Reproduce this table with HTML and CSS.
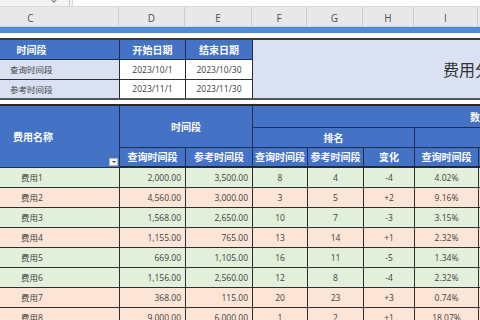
FILE: index.html
```html
<!DOCTYPE html>
<html lang="zh-CN">
<head>
<meta charset="utf-8">
<title>费用分析</title>
<link rel="stylesheet" href="styles.css">
</head>
<body>
<div class="formula">
  <div class="namebox"><span class="caret"></span></div>
  <div class="fx"></div>
</div>
<div class="sheet">
  <div class="colheads">
    <span class="c-c">C</span><span class="c-d">D</span><span class="c-e">E</span><span class="c-f">F</span><span class="c-g">G</span><span class="c-h">H</span><span class="c-i">I</span><span class="c-j"></span>
  </div>
  <div class="bluebar"></div>
  <div class="gap"></div>
  <table class="grid t1">
    <colgroup><col class="w-c"><col class="w-d"><col class="w-e"><col class="w-f"><col class="w-g"><col class="w-h"><col class="w-i"><col class="w-j"></colgroup>
    <tr>
      <th class="h">时间段</th>
      <th class="h">开始日期</th>
      <th class="h">结束日期</th>
      <td class="title" colspan="5" rowspan="3">费用分析</td>
    </tr>
    <tr>
      <td class="label">查询时间段</td>
      <td class="date">2023/10/1</td>
      <td class="date">2023/10/30</td>
    </tr>
    <tr class="last">
      <td class="label">参考时间段</td>
      <td class="date">2023/11/1</td>
      <td class="date">2023/11/30</td>
    </tr>
  </table>
  <table class="grid t2">
    <colgroup><col class="w-c"><col class="w-d"><col class="w-e"><col class="w-f"><col class="w-g"><col class="w-h"><col class="w-i"><col class="w-j"></colgroup>
    <tr class="r1">
      <th class="h name-h" rowspan="3">费用名称<span class="filter"></span></th>
      <th class="h" colspan="2" rowspan="2">时间段</th>
      <th class="h data-h" colspan="5">数据分析</th>
    </tr>
    <tr class="r2">
      <th class="h" colspan="3">排名</th>
      <th class="h" colspan="2"></th>
    </tr>
    <tr class="r3">
      <th class="h">查询时间段</th>
      <th class="h">参考时间段</th>
      <th class="h">查询时间段</th>
      <th class="h">参考时间段</th>
      <th class="h">变化</th>
      <th class="h">查询时间段</th>
      <th class="h"></th>
    </tr>
    <tr class="down"><td class="nm">费用1</td><td class="num">2,000.00</td><td class="num">3,500.00</td><td>8</td><td>4</td><td>-4</td><td>4.02%</td><td></td></tr>
    <tr class="up"><td class="nm">费用2</td><td class="num">4,560.00</td><td class="num">3,000.00</td><td>3</td><td>5</td><td>+2</td><td>9.16%</td><td></td></tr>
    <tr class="down"><td class="nm">费用3</td><td class="num">1,568.00</td><td class="num">2,650.00</td><td>10</td><td>7</td><td>-3</td><td>3.15%</td><td></td></tr>
    <tr class="up"><td class="nm">费用4</td><td class="num">1,155.00</td><td class="num">765.00</td><td>13</td><td>14</td><td>+1</td><td>2.32%</td><td></td></tr>
    <tr class="down"><td class="nm">费用5</td><td class="num">669.00</td><td class="num">1,105.00</td><td>16</td><td>11</td><td>-5</td><td>1.34%</td><td></td></tr>
    <tr class="down"><td class="nm">费用6</td><td class="num">1,156.00</td><td class="num">2,560.00</td><td>12</td><td>8</td><td>-4</td><td>2.32%</td><td></td></tr>
    <tr class="up"><td class="nm">费用7</td><td class="num">368.00</td><td class="num">115.00</td><td>20</td><td>23</td><td>+3</td><td>0.74%</td><td></td></tr>
    <tr class="up"><td class="nm">费用8</td><td class="num">9,000.00</td><td class="num">6,000.00</td><td>1</td><td>2</td><td>+1</td><td>18.07%</td><td></td></tr>
  </table>
</div>
</body>
</html>
```
FILE: styles.css
```css
* { box-sizing: border-box; }
html, body { margin: 0; padding: 0; }
body {
  width: 480px;
  height: 320px;
  overflow: hidden;
  background: #ffffff;
  font-family: "Open Sans", "Noto Sans CJK SC", sans-serif;
  color: #404040;
}

/* formula bar strip */
.formula {
  height: 7px;
  display: flex;
  background: #f4f4f4;
  border-bottom: 1px solid #d9d9d9;
}
.namebox {
  width: 70px;
  border-right: 1px solid #c9c9c9;
  position: relative;
}
.caret {
  position: absolute;
  left: 52px;
  top: -2px;
  width: 4px;
  height: 4px;
  border-right: 1px solid #777;
  border-bottom: 1px solid #777;
  transform: rotate(45deg);
}
.fx {
  flex: 1;
  margin-left: 2px;
  background: #ffffff;
  border-left: 1px solid #d5d5d5;
}

/* sheet scrolled so that column C is partly hidden */
.sheet {
  margin-left: -57px;
  width: 600px;
}

.colheads {
  display: flex;
  height: 20px;
  background: #e8e8e8;
  border-bottom: 1px solid #d2d2d2;
}
.colheads span {
  flex: none;
  height: 100%;
  border-right: 1px solid #cdcdcd;
  font: 10px "Open Sans", sans-serif;
  color: #505050;
  text-align: center;
  line-height: 22px;
}
.c-c { width: 176px; }
.c-d { width: 66px; }
.c-e { width: 67px; }
.c-f { width: 55px; }
.c-g { width: 56px; }
.c-h { width: 51px; }
.c-i { width: 64px; }
.c-j { width: 60px; }

.bluebar {
  height: 6px;
  background: #4d8dd5;
}
.gap { height: 5px; }

/* tables */
.grid {
  border-collapse: collapse;
  table-layout: fixed;
  width: 595px;
}
.w-c { width: 176px; }
.w-d { width: 66px; }
.w-e { width: 67px; }
.w-f { width: 55px; }
.w-g { width: 56px; }
.w-h { width: 51px; }
.w-i { width: 64px; }
.w-j { width: 60px; }

.grid th, .grid td {
  border: 1px solid #2e2e2e;
  padding: 0;
  height: 20px;
  vertical-align: middle;
  font-size: 8.5px;
  font-weight: normal;
  text-align: center;
  white-space: nowrap;
  overflow: hidden;
}
.grid .h {
  background: #4472c4;
  color: #ffffff;
  font-weight: bold;
  font-size: 10px;
  border-color: #1e2f52;
}

.t1 { border-top: 2px solid #3a3a3a; }
.t1 .label {
  background: #d9e1f2;
  text-align: left;
  padding-left: 66px;
  color: #454545;
}
.t1 .date { background: #ffffff; }
.t1 .title {
  background: #d9e1f2;
  text-align: left;
  padding-left: 190px;
  font-size: 16px;
  color: #333333;
  border-bottom: 2px solid #555555;
}
.t1 .last td { border-bottom: 2px solid #555555; }

.t2 {
  margin-top: 4px;
  border-top: 2px solid #2a2a2a;
}
.t2 .r1 th { height: 22px; }
.t2 .r3 th { border-bottom: 2px solid #1e2a40; }
.t2 .name-h {
  position: relative;
  text-align: left;
  padding-left: 69px;
}
.t2 .data-h {
  text-align: left;
  padding-left: 217px;
}
.filter {
  position: absolute;
  right: 1px;
  bottom: 1px;
  width: 9px;
  height: 8px;
  background: #f2f2f2;
  border: 1px solid #b8b8b8;
}
.filter::after {
  content: "";
  position: absolute;
  left: 2px;
  top: 2px;
  border-left: 2px solid transparent;
  border-right: 2px solid transparent;
  border-top: 2px solid #444;
}

.t2 .nm {
  text-align: left;
  padding-left: 77px;
}
.t2 .num {
  text-align: right;
  padding-right: 4px;
}
.down td { background: #e2efda; }
.up td { background: #fce4d6; }
```
